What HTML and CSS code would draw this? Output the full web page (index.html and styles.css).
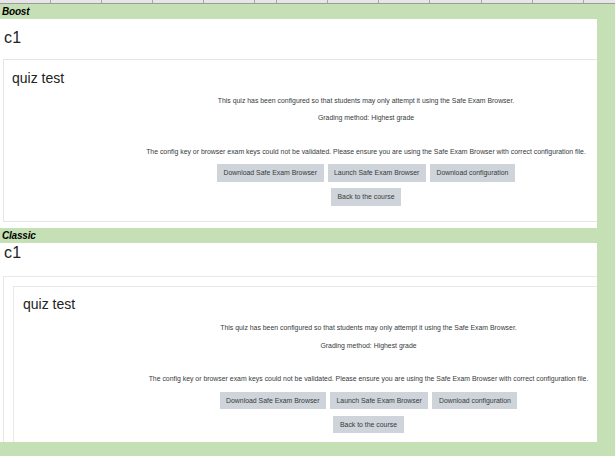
FILE: index.html
```html
<!DOCTYPE html>
<html lang="en">
<head>
<meta charset="utf-8">
<title>Safe Exam Browser – Boost / Classic</title>
<link rel="stylesheet" href="styles.css">
</head>
<body>
<div class="colheads">
  <span class="ch w50"></span><span class="ch w51"></span><span class="ch w51"></span><span class="ch w51"></span><span class="ch w51"></span><span class="ch w22"></span><span class="ch w51"></span><span class="ch w51"></span><span class="ch w51"></span><span class="ch w52"></span><span class="ch w51"></span><span class="ch w50"></span><span class="ch wrest"></span>
</div>

<div class="label">Boost</div>
<div class="row">
  <div class="shot boost">
    <h1 class="course">c1</h1>
    <div class="card">
      <h2 class="quiz">quiz test</h2>
      <p class="msg m1">This quiz has been configured so that students may only attempt it using the Safe Exam Browser.</p>
      <p class="msg m2">Grading method: Highest grade</p>
      <p class="msg m3">The config key or browser exam keys could not be validated. Please ensure you are using the Safe Exam Browser with correct configuration file.</p>
      <div class="btns b1">
        <span class="btn">Download Safe Exam Browser</span>
        <span class="btn">Launch Safe Exam Browser</span>
        <span class="btn">Download configuration</span>
      </div>
      <div class="btns b2">
        <span class="btn">Back to the course</span>
      </div>
    </div>
  </div>
</div>

<div class="label">Classic</div>
<div class="row">
  <div class="shot classic">
    <h1 class="course">c1</h1>
    <div class="outer">
      <div class="inner">
        <h2 class="quiz">quiz test</h2>
        <p class="msg m1">This quiz has been configured so that students may only attempt it using the Safe Exam Browser.</p>
        <p class="msg m2">Grading method: Highest grade</p>
        <p class="msg m3">The config key or browser exam keys could not be validated. Please ensure you are using the Safe Exam Browser with correct configuration file.</p>
        <div class="btns b1">
          <span class="btn">Download Safe Exam Browser</span>
          <span class="btn">Launch Safe Exam Browser</span>
          <span class="btn">Download configuration</span>
        </div>
        <div class="btns b2">
          <span class="btn">Back to the course</span>
        </div>
      </div>
    </div>
  </div>
</div>
</body>
</html>
```

FILE: styles.css
```css
* { box-sizing: border-box; }

html, body {
  margin: 0;
  padding: 0;
}

body {
  width: 615px;
  height: 456px;
  overflow: hidden;
  background: #c5e0b4;
  font-family: "Liberation Sans", Arial, sans-serif;
  color: #373a3c;
}

/* spreadsheet column header strip */
.colheads {
  display: flex;
  height: 4px;
  background: #e6e6e6;
  border-bottom: 1px solid #9c9c9c;
  overflow: hidden;
}
.ch { height: 3px; border-right: 1px solid #a8a8a8; flex: none; }
.w50 { width: 51px; }
.w51 { width: 51px; }
.w52 { width: 52px; }
.w22 { width: 22px; }
.wrest { flex: 1; border-right: 0; }

.label {
  height: 15px;
  padding-left: 2px;
  font-family: "Liberation Sans", Arial, sans-serif;
  font-weight: bold;
  font-style: italic;
  font-size: 10px;
  line-height: 15px;
  color: #000;
  letter-spacing: -0.2px;
}

.row {
  display: flex;
}

.shot {
  width: 597px;
  background: #fff;
  overflow: hidden;
  flex: none;
}
.boost { height: 209px; }
.classic { height: 199px; }

.course {
  margin: 0;
  padding-left: 4px;
  font-size: 16px;
  line-height: 16px;
  font-weight: normal;
  color: #222;
  letter-spacing: 0.3px;
}
.boost .course { margin-top: 11px; }
.classic .course { margin-top: 2px; }

.card {
  margin: 13px 0 0 3px;
  width: 726px;
  height: 163px;
  border: 1px solid #e5e5e5;
  padding: 11px 8px 0 8px;
}

.outer {
  margin: 15px 0 0 3px;
  width: 731px;
  height: 200px;
  border: 1px solid #e8e8e8;
  border-bottom: 0;
  padding: 9px 0 0 9px;
}
.inner {
  width: 711px;
  height: 200px;
  border: 1px solid #e8e8e8;
  border-bottom: 0;
  padding: 10px 9px 0 9px;
}

.quiz {
  margin: 0;
  font-size: 14px;
  line-height: 14px;
  font-weight: normal;
  color: #222;
}

.msg {
  margin: 0;
  text-align: center;
  font-size: 6.9px;
  line-height: 8px;
  height: 8px;
  white-space: nowrap;
}
.card .m1 { margin-top: 12px; }
.card .m2 { margin-top: 9px; }
.card .m3 { margin-top: 26px; }
.inner .m1 { margin-top: 13px; }
.inner .m2 { margin-top: 10px; }
.inner .m3 { margin-top: 25px; }

.btns {
  display: flex;
  justify-content: center;
  gap: 4px;
}
.card .b1 { margin-top: 8px; }
.card .b2 { margin-top: 6px; }
.inner .b1 { margin-top: 9px; }
.inner .b2 { margin-top: 7px; }

.btn {
  display: block;
  height: 18px;
  line-height: 18px;
  padding: 0 6.5px;
  background: #ced4da;
  font-size: 6.9px;
  color: #373a3c;
  white-space: nowrap;
}
.classic .btn { height: 17px; line-height: 17px; }
```
